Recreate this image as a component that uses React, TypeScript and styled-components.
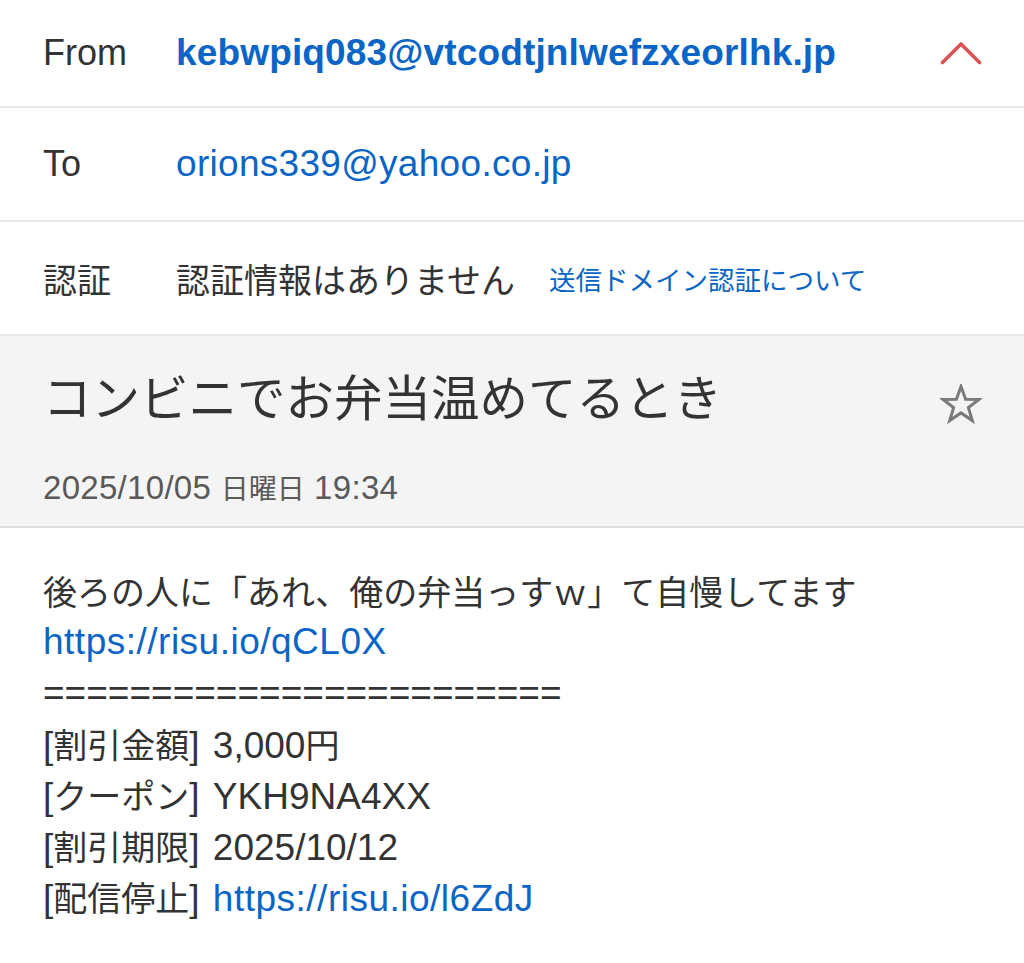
import React from "react";
import styled, { createGlobalStyle } from "styled-components";

const GlobalStyle = createGlobalStyle`
  html, body { margin: 0; padding: 0; background: #ffffff; }
  body {
    font-family: "Liberation Sans", "Noto Sans CJK JP", sans-serif;
    color: #333333;
    -webkit-font-smoothing: antialiased;
  }
`;

const BLUE = "#0b65c6";

const Page = styled.div`
  width: 1024px;
  min-height: 963px;
  background: #ffffff;
`;

const HeaderRow = styled.div<{ $h: number }>`
  display: flex;
  align-items: center;
  height: ${(p) => p.$h}px;
  padding: 0 42px 0 43px;
  border-bottom: 2px solid #e7e7e7;
  box-sizing: content-box;
`;

const Label = styled.div<{ $size: number }>`
  width: 133px;
  flex: none;
  font-size: ${(p) => p.$size}px;
  color: #333333;
  white-space: nowrap;
`;

const Value = styled.div<{ $size: number; $bold?: boolean; $blue?: boolean; $track?: number }>`
  flex: 1;
  display: flex;
  align-items: center;
  gap: 34px;
  font-size: ${(p) => p.$size}px;
  font-weight: ${(p) => (p.$bold ? 700 : 400)};
  letter-spacing: ${(p) => p.$track ?? 0}px;
  color: ${(p) => (p.$blue ? BLUE : "#333333")};
  white-space: nowrap;
`;

const Ja = styled.span<{ $size?: number }>`
  font-family: "Noto Sans CJK JP", sans-serif;
  letter-spacing: 0;
  ${(p) => (p.$size ? `font-size: ${p.$size}px;` : "")}
`;

const SmallLink = styled.span`
  font-family: "Noto Sans CJK JP", sans-serif;
  font-size: 26.5px;
  color: ${BLUE};
`;

const IconBox = styled.div`
  flex: none;
  width: 42px;
  height: 42px;
  display: flex;
  align-items: center;
  justify-content: center;
`;

const SubjectBand = styled.div`
  background: #f4f4f4;
  padding: 27px 42px 18px 43px;
  border-bottom: 2px solid #dedede;
`;

const SubjectRow = styled.div`
  display: flex;
  justify-content: space-between;
  align-items: flex-start;
`;

const Subject = styled.h1`
  margin: 0;
  font-family: "Noto Sans CJK JP", sans-serif;
  font-weight: 400;
  font-size: 48.5px;
  line-height: 64px;
  color: #333333;
  white-space: nowrap;
`;

const StarBox = styled(IconBox)`
  margin-top: 20px;
`;

const DateLine = styled.div`
  margin-top: 40px;
  font-size: 33px;
  line-height: 40px;
  letter-spacing: 0.3px;
  color: #5a5a5a;
  white-space: nowrap;
`;

const Body = styled.div`
  padding: 37px 43px 40px 43px;
  font-size: 37px;
  line-height: 51px;
  color: #333333;
`;

const Line = styled.div`
  white-space: nowrap;
  height: 51px;
  word-spacing: 3px;
`;

const Link = styled.a`
  color: ${BLUE};
  text-decoration: none;
  letter-spacing: 0.5px;
`;

const Chevron = () => (
  <svg width="42" height="24" viewBox="0 0 42 24" fill="none">
    <path
      d="M2.5 21.5 L21 3 L39.5 21.5"
      stroke="#e05252"
      strokeWidth="3.6"
      strokeLinecap="round"
      strokeLinejoin="round"
    />
  </svg>
);

const Star = () => (
  <svg width="42" height="40" viewBox="0 0 42 40" fill="none">
    <path
      d="M21 2.5 L25.6 15.2 L39 15.4 L28.4 23.6 L32.3 36.6 L21 28.9 L9.7 36.6 L13.6 23.6 L3 15.4 L16.4 15.2 Z"
      stroke="#7a7a7a"
      strokeWidth="3"
      strokeLinejoin="miter"
    />
  </svg>
);

export default function App() {
  return (
    <Page>
      <GlobalStyle />
      <HeaderRow $h={106}>
        <Label $size={36}>From</Label>
        <Value $size={37} $bold $blue $track={0.15}>
          kebwpiq083@vtcodtjnlwefzxeorlhk.jp
        </Value>
        <IconBox>
          <Chevron />
        </IconBox>
      </HeaderRow>
      <HeaderRow $h={112}>
        <Label $size={36}>To</Label>
        <Value $size={37} $blue $track={0.3}>
          orions339@yahoo.co.jp
        </Value>
      </HeaderRow>
      <HeaderRow $h={112}>
        <Label $size={34}>
          <Ja>認証</Ja>
        </Label>
        <Value $size={34}>
          <Ja>認証情報はありません</Ja>
          <SmallLink>送信ドメイン認証について</SmallLink>
        </Value>
      </HeaderRow>
      <SubjectBand>
        <SubjectRow>
          <Subject>コンビニでお弁当温めてるとき</Subject>
          <StarBox>
            <Star />
          </StarBox>
        </SubjectRow>
        <DateLine>
          2025/10/05 <Ja $size={28}>日曜日</Ja> 19:34
        </DateLine>
      </SubjectBand>
      <Body>
        <Line>
          <Ja $size={34}>後ろの人に「あれ、俺の弁当っすｗ」て自慢してます</Ja>
        </Line>
        <Line>
          <Link href="#">https://risu.io/qCL0X</Link>
        </Line>
        <Line>========================</Line>
        <Line>
          [<Ja $size={34}>割引金額</Ja>] 3,000<Ja $size={34}>円</Ja>
        </Line>
        <Line>
          [<Ja $size={34}>クーポン</Ja>] YKH9NA4XX
        </Line>
        <Line>
          [<Ja $size={34}>割引期限</Ja>] 2025/10/12
        </Line>
        <Line>
          [<Ja $size={34}>配信停止</Ja>] <Link href="#">https://risu.io/l6ZdJ</Link>
        </Line>
      </Body>
    </Page>
  );
}
